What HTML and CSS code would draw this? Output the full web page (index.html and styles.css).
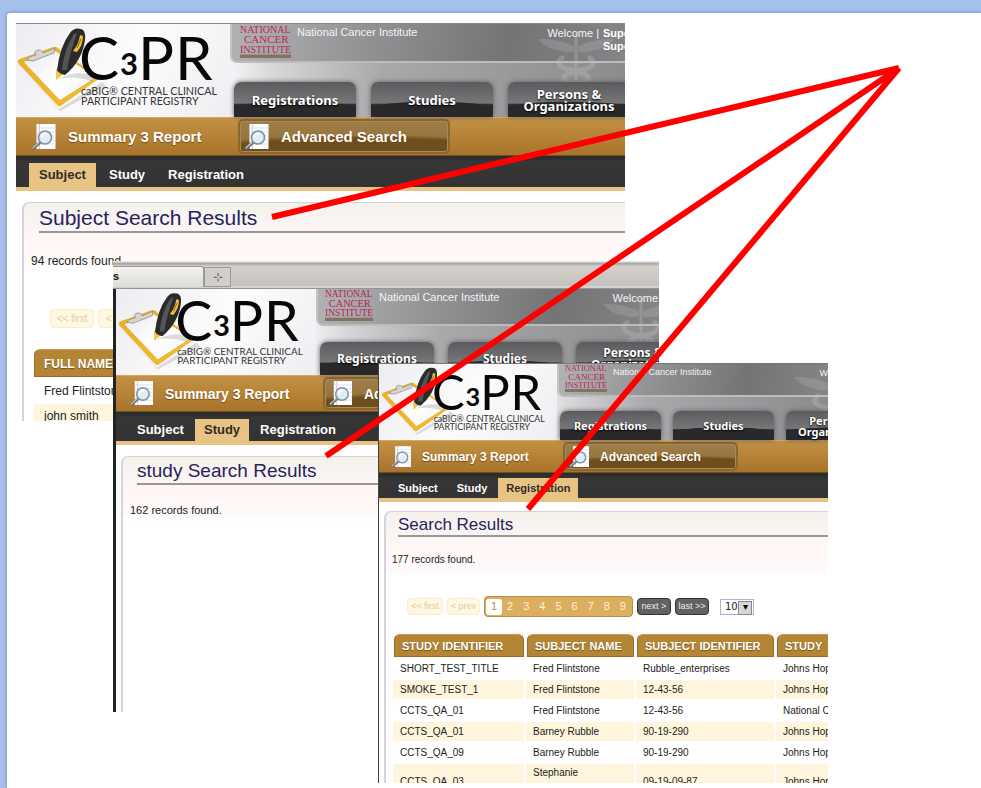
FILE: index.html
```html
<!DOCTYPE html>
<html lang="en">
<head>
<meta charset="utf-8">
<title>C3PR Search Results</title>
<link rel="stylesheet" href="styles.css">
</head>
<body>
<svg class="defs" aria-hidden="true">
  <defs>
    <linearGradient id="pen" x1="0" y1="0" x2="1" y2="0"><stop offset="0" stop-color="#111"/><stop offset=".5" stop-color="#4a4a4c"/><stop offset="1" stop-color="#1c1c1c"/></linearGradient>
    <linearGradient id="board" x1="0" y1="0" x2="1" y2="1"><stop offset="0" stop-color="#e8ae27"/><stop offset="1" stop-color="#f3bd35"/></linearGradient>
    <linearGradient id="paper" x1="0" y1="0" x2="1" y2="1"><stop offset="0" stop-color="#e9e9ed"/><stop offset=".5" stop-color="#fff"/><stop offset="1" stop-color="#f4f4f6"/></linearGradient>
    <symbol id="logo" viewBox="0 0 214 93">
      <path d="M4 42 43 85 86 58 90 62 44 87 Z" fill="#bbb" opacity=".5"/>
      <path d="M2 39Q1 36 4 35L37 23Q41 22 44 26L84 54 46 81Q43 84 40 80Z" fill="url(#board)"/>
      <path d="M8 38 39 27 80 53 44 76Z" fill="#fff" stroke="#d1a244" stroke-width=".6"/>
      <path d="M8 38 39 27 80 53 44 76Z" fill="url(#paper)"/>
      <path d="M42 55Q65 44 79 54L75 57Q58 51 42 55Z" fill="#999" opacity=".35"/>
      <path d="M11 36Q11 33 20 31Q17 27 22 26Q27 26 27 29L39 24 38 29 17 37Z" fill="#d6d4ce" stroke="#8d8b84" stroke-width=".8"/>
      <path d="M40 45 40 56 49 49Z" fill="#f4c447"/>
      <path d="M41 46Q44 22 54 9Q58 3 65 5Q70 6 69 16Q66 37 49 51Q43 50 41 46Z" fill="#2b2b2c"/>
      <path d="M46 46Q48 25 58 10L61 9Q54 28 51 46Z" fill="#555457"/>
      <path d="M64 11 67 12Q67 21 61 28L57 27Q63 20 64 11Z" fill="#f2bd2e"/>
      <path d="M65 15 61 24" stroke="#8d6d16" stroke-width="1"/>
      <g font-family="Lato, sans-serif" fill="#080808">
        <text x="63" y="56" font-size="60">C</text>
        <text x="104" y="51" font-size="31" font-weight="700">3</text>
        <text x="122" y="56" font-size="60">P</text>
        <text x="159" y="56" font-size="60">R</text>
      </g>
      <g font-family="Lato, sans-serif" font-size="10.7" fill="#333">
        <text x="65" y="71">caBIG® CENTRAL CLINICAL</text>
        <text x="65" y="81">PARTICIPANT REGISTRY</text>
      </g>
    </symbol>
    <symbol id="nci" viewBox="0 0 52 34">
      <g font-family="Liberation Serif, serif" fill="#b8265a">
        <text x="0" y="9" font-size="10">NATIONAL</text>
        <text x="4" y="19" font-size="11">CANCER</text>
        <text x="0" y="29" font-size="10">INSTITUTE</text>
      </g>
      <path d="M0 30.500H51V34H0Z" fill="#82745f"/>
    </symbol>
    <symbol id="doc" viewBox="0 0 24 26">
      <path d="M5 0H24V25H5Z" fill="#fbfdff"/>
      <path d="M5 4H24M5 8H24M5 12H24M5 16H24M5 20H24" stroke="#d5e4f5" stroke-width="1"/>
      <path d="M8 0V25" stroke="#f2bccb" stroke-width="1"/>
      <path d="M9 18 1 25" stroke="#6f7883" stroke-width="3"/>
      <path d="M8 18 1 24" stroke="#dfe4e8" stroke-width="1"/>
      <circle cx="13.500" cy="13.500" r="6.500" fill="#dceafa" fill-opacity=".85" stroke="#87919c" stroke-width="1.600"/>
      <path d="M10 13Q11 9 15 10" fill="none" stroke="#fff" stroke-width="1.500"/>
    </symbol>
    <symbol id="staff" viewBox="0 0 80 56">
      <g fill="none" stroke="#c4c4c4" stroke-linecap="round">
        <path d="M40 2V52" stroke-width="3"/>
        <path d="M26 26Q18 32 30 37Q56 42 52 48Q40 56 28 48Q24 42 50 37Q62 32 54 26" stroke-width="5"/>
      </g>
      <path d="M38 14Q20 6 2 7Q10 17 22 18Q30 22 38 19ZM42 14Q60 6 78 7Q70 17 58 18Q50 22 42 19Z" fill="#b4b4b4"/>
    </symbol>
  </defs>
</svg>

<main class="sheet">
  <section class="shot shot-subject" aria-label="Subject search">
    <header class="masthead">
      <svg class="logo" role="img" aria-label="C3PR"><use href="#logo"/></svg>
      <div class="mast-right">
        <svg class="staff" aria-hidden="true"><use href="#staff"/></svg>
        <div class="institute">
          <svg class="nci" role="img" aria-label="NCI"><use href="#nci"/></svg>
          <span class="inst-name">National Cancer Institute</span>
          <span class="welcome">Welcome |</span>
          <b class="user">Supe<br>Supe</b>
        </div>
        <nav class="areas">
          <a href="#">Registrations</a><a href="#">Studies</a><a href="#">Persons &amp;<br>Organizations</a>
        </nav>
      </div>
    </header>
    <nav class="goldbar">
      <a class="gold-link" href="#"><svg><use href="#doc"/></svg>Summary 3 Report</a>
      <a class="gold-link current" href="#"><svg><use href="#doc"/></svg>Advanced Search</a>
    </nav>
    <nav class="tabs"><a class="on" href="#">Subject</a><a href="#">Study</a><a href="#">Registration</a></nav>
    <div class="results">
      <h2>Subject Search Results</h2>
      <p class="count">94 records found.</p>
      <div class="pager"><button class="off" disabled>&lt;&lt; first</button><button class="off" disabled>&lt; prev</button></div>
      <table>
        <thead><tr><th><span>FULL NAME</span></th></tr></thead>
        <tbody><tr><td>Fred Flintstone</td></tr><tr><td>john smith</td></tr></tbody>
      </table>
    </div>
  </section>

  <section class="shot shot-study" aria-label="Study search">
    <div class="browser-tabs"><span class="browser-tab">s</span><button class="new-tab" aria-label="New tab">⊹</button></div>
    <div class="window">
    <header class="masthead">
      <svg class="logo" role="img" aria-label="C3PR"><use href="#logo"/></svg>
      <div class="mast-right">
        <svg class="staff" aria-hidden="true"><use href="#staff"/></svg>
        <div class="institute">
          <svg class="nci" role="img" aria-label="NCI"><use href="#nci"/></svg>
          <span class="inst-name">National Cancer Institute</span>
          <span class="welcome">Welcome</span>
        </div>
        <nav class="areas">
          <a href="#">Registrations</a><a href="#">Studies</a><a href="#">Persons &amp;<br>Organizations</a>
        </nav>
      </div>
    </header>
    <nav class="goldbar">
      <a class="gold-link" href="#"><svg><use href="#doc"/></svg>Summary 3 Report</a>
      <a class="gold-link current" href="#"><svg><use href="#doc"/></svg>Advanced Search</a>
    </nav>
    <nav class="tabs"><a href="#">Subject</a><a class="on" href="#">Study</a><a href="#">Registration</a></nav>
    <div class="results">
      <h2>study Search Results</h2>
      <p class="count">162 records found.</p>
    </div>
    </div>
  </section>

  <section class="shot shot-registration" aria-label="Registration search">
    <header class="masthead">
      <svg class="logo" role="img" aria-label="C3PR"><use href="#logo"/></svg>
      <div class="mast-right">
        <svg class="staff" aria-hidden="true"><use href="#staff"/></svg>
        <div class="institute">
          <svg class="nci" role="img" aria-label="NCI"><use href="#nci"/></svg>
          <span class="inst-name">National Cancer Institute</span>
          <span class="welcome">Welcome</span>
        </div>
        <nav class="areas">
          <a href="#">Registrations</a><a href="#">Studies</a><a href="#">Persons &amp;<br>Organizations</a>
        </nav>
      </div>
    </header>
    <nav class="goldbar">
      <a class="gold-link" href="#"><svg><use href="#doc"/></svg>Summary 3 Report</a>
      <a class="gold-link current" href="#"><svg><use href="#doc"/></svg>Advanced Search</a>
    </nav>
    <nav class="tabs"><a href="#">Subject</a><a href="#">Study</a><a class="on" href="#">Registration</a></nav>
    <div class="results">
      <h2>Search Results</h2>
      <p class="count">177 records found.</p>
      <div class="pager">
        <button class="off" disabled>&lt;&lt; first</button><button class="off" disabled>&lt; prev</button>
        <div class="pages"><button class="now">1</button><button>2</button><button>3</button><button>4</button><button>5</button><button>6</button><button>7</button><button>8</button><button>9</button></div>
        <button class="go">next &gt;</button><button class="go">last &gt;&gt;</button>
        <span class="size"><select aria-label="Rows per page"><option>10</option></select></span>
      </div>
      <table>
        <colgroup><col class="c1"><col class="c2"><col class="c3"><col class="c4"></colgroup>
        <thead><tr><th><span>STUDY IDENTIFIER</span></th><th><span>SUBJECT NAME</span></th><th><span>SUBJECT IDENTIFIER</span></th><th><span>STUDY</span></th></tr></thead>
        <tbody>
          <tr><td>SHORT_TEST_TITLE</td><td>Fred Flintstone</td><td>Rubble_enterprises</td><td>Johns Hopkins</td></tr>
          <tr><td>SMOKE_TEST_1</td><td>Fred Flintstone</td><td>12-43-56</td><td>Johns Hopkins</td></tr>
          <tr><td>CCTS_QA_01</td><td>Fred Flintstone</td><td>12-43-56</td><td>National Cancer</td></tr>
          <tr><td>CCTS_QA_01</td><td>Barney Rubble</td><td>90-19-290</td><td>Johns Hopkins</td></tr>
          <tr><td>CCTS_QA_09</td><td>Barney Rubble</td><td>90-19-290</td><td>Johns Hopkins</td></tr>
          <tr><td>CCTS_QA_03</td><td>Stephanie<br>&nbsp;</td><td>09-19-09-87</td><td>Johns Hopkins</td></tr>
        </tbody>
      </table>
    </div>
  </section>
</main>
<svg class="pointers" width="981" height="788" viewBox="0 0 981 788" aria-hidden="true">
  <path d="M272 217 899 68M326 456 899 68M528 509 899 68" stroke="#f00" stroke-width="6" fill="none"/>
</svg>
</body>
</html>
```
FILE: styles.css
```css
* { box-sizing: border-box; }
body {
  margin: 0;
  min-height: 100vh;
  padding: 13px 0 0 7px;
  display: flex;
  background: #a6c0ec;
  font-family: "Liberation Sans", Arial, sans-serif;
  overflow: hidden;
}
a { color: inherit; text-decoration: none; }
button { border: 0; padding: 0; margin: 0; background: none; font-family: inherit; }
.defs { position: absolute; width: 0; height: 0; }
.sheet { flex: 1; background: #fff; border-radius: 3px 0 0 0; box-shadow: 0 0 4px #6f88b4; }
.pointers { position: absolute; left: 0; top: 0; z-index: 1; pointer-events: none; }

/* Screens placed freely on the sheet */
.shot { position: absolute; isolation: isolate; overflow: hidden; background: #fff; color: #222; }
.shot-subject {
  left: 16px; top: 23px; width: 609px; height: 398px; border-top: 1px solid #8a8a8c;
  --head: 93px; --logo: 214px; --inst: 39px; --tab-w: 122px; --tab-h: 35px; --tab-gap: 15px; --tab-in: 4px;
  --nci-w: 52px; --nci-h: 34px; --nci-in: 8px; --small: 11px; --area: 13px; --area-line: 12px; --wel: 130px;
  --gold: 39px; --gold-fs: 15px; --gold-col: 222px; --gold-in: 15px; --icon-w: 25px; --icon-h: 26px; --icon-gap: 12px; --btn-w: 212px;
  --dark: 31px; --dark-fs: 13px; --on-h: 24px; --tab-pad: 10px; --tabs-in: 13px; --tabs-gap: 3px;
  --res-top: 11px; --res-left: 6px; --h2: 21px; --h2-h: 30px; --h2-in: 15px; --count: 12px; --count-top: 21px; --count-in: 7px;
  --pager-top: 40px; --pager-in: 26px; --table-top: 18px; --table-in: 8px; --th-h: 28px; --th: 12px; --td: 12px; --row: 23px; --cell-in: 10px;
}
.shot-study {
  left: 113px; top: 261px; width: 546px; height: 451px;
  --head: 86px; --logo: 200px; --inst: 37px; --tab-w: 114px; --tab-h: 33px; --tab-gap: 14px; --tab-in: 4px;
  --nci-w: 49px; --nci-h: 32px; --nci-in: 7px; --small: 11px; --area: 12px; --area-line: 12px; --wel: 113px;
  --gold: 37px; --gold-fs: 14px; --gold-col: 207px; --gold-in: 14px; --icon-w: 23px; --icon-h: 25px; --icon-gap: 12px; --btn-w: 200px;
  --dark: 29px; --dark-fs: 13px; --on-h: 22px; --tab-pad: 9px; --tabs-in: 12px; --tabs-gap: 2px;
  --res-top: 11px; --res-left: 5px; --h2: 19px; --h2-h: 28px; --h2-in: 14px; --count: 11px; --count-top: 18px; --count-in: 7px;
}
.shot-registration {
  left: 378px; top: 363px; width: 450px; height: 420px; border-top: 1px solid #777; border-left: 1px solid #444;
  --head: 76px; --logo: 178px; --inst: 33px; --tab-w: 101px; --tab-h: 29px; --tab-gap: 12px; --tab-in: 3px;
  --nci-w: 43px; --nci-h: 28px; --nci-in: 6px; --small: 9px; --area: 11px; --area-line: 11px; --wel: 108px;
  --gold: 33px; --gold-fs: 12px; --gold-col: 184px; --gold-in: 12px; --icon-w: 20px; --icon-h: 22px; --icon-gap: 11px; --btn-w: 175px;
  --dark: 25px; --dark-fs: 11px; --on-h: 20px; --tab-pad: 8px; --tabs-in: 11px; --tabs-gap: 3px;
  --res-top: 9px; --res-left: 5px; --h2: 17px; --h2-h: 25px; --h2-in: 12px; --count: 10px; --count-top: 16px; --count-in: 6px;
  --pager-top: 29px; --pager-in: 21px; --table-top: 13px; --table-in: 5px; --th-h: 23px; --th: 11px; --td: 10px; --row: 19px; --cell-in: 7px;
}

.browser-tabs { display: flex; align-items: flex-end; height: 28px; padding-bottom: 2px; background: linear-gradient(#e8e6e2 0 1px, #aaa8a5 2px 3px, #d4d1cc 5px, #c5c2bd 25px, #eee 26px, #777 28px); }
.browser-tab { width: 91px; height: 21px; padding-left: 0; border: 1px solid #999; border-left: 0; border-bottom: 0; border-radius: 0 3px 0 0; background: linear-gradient(#f4f3f1, #dddbd7); font: bold 11px/19px "Liberation Sans", sans-serif; color: #111; }
.new-tab { width: 27px; height: 20px; border: 1px solid #999; background: #d2cfcb; color: #555; font-size: 12px; line-height: 16px; }
.window { border-left: 3px solid #202224; height: 423px; }

.masthead { display: grid; grid-template-columns: var(--logo) 1fr; height: var(--head); background: linear-gradient(90deg, #f1eff3 0, #f2f1f4 36%, #d8d7da 42%, #a9a8ab 60%, #8c8b8e 100%); }
.logo { width: 100%; height: var(--head); background: linear-gradient(120deg, #eeecf1, #fcfcfd 50%, #efedf1); }
.mast-right { position: relative; display: flex; flex-direction: column; justify-content: space-between; min-width: 0; }
.institute { display: flex; height: var(--inst); padding-left: var(--nci-in); border-left: 2px solid #c4c4c6; border-bottom: 2px solid #bcbcbe; border-radius: 0 0 0 7px; background: linear-gradient(100deg, #b2b2b4, #8d8c8e 40%, #747376 70%, #858486); color: #f4f4f4; font-size: var(--small); line-height: 13px; white-space: nowrap; }
.nci { flex: none; width: var(--nci-w); height: var(--nci-h); }
.inst-name { margin: 2px var(--wel) 0 5px; }
.welcome, .user { position: relative; margin-top: 3px; margin-right: 4px; }
.user { color: #fff; }
.staff { position: absolute; z-index: 1; right: 9px; top: 8px; width: 80px; height: 56px; opacity: .3; }
.shot-registration .staff { right: -44px; top: 6px; }
.shot-study .staff { right: -22px; }
.welcome, .user, .areas { z-index: 2; }
.areas { display: flex; gap: var(--tab-gap); padding-left: var(--tab-in); position: relative; }
.areas a { flex: none; display: flex; align-items: center; justify-content: center; width: var(--tab-w); height: var(--tab-h); border-radius: 7px 7px 0 0; background: radial-gradient(ellipse 75% 45% at 50% 100%, #29292b 95%, transparent 100%), linear-gradient(#5b5a5d, #777679 60%, #29292b 65%); box-shadow: 0 0 5px #5c5b5e; color: #fff; font: bold var(--area)/var(--area-line) "Noto Sans", sans-serif; text-align: center; text-shadow: 0 1px 2px #000; }

.goldbar { display: grid; grid-template-columns: var(--gold-col) var(--btn-w); align-items: center; height: var(--gold); border-top: 1px solid #d4a75a; border-bottom: 1px solid #75501b; background: linear-gradient(#c39143, #a8742b); color: #fff; font-size: var(--gold-fs); font-weight: bold; white-space: nowrap; }
.gold-link { display: flex; align-items: center; gap: var(--icon-gap); padding-left: var(--gold-in); text-shadow: 0 1px 1px #6f4a16; }
.gold-link svg { flex: none; width: var(--icon-w); height: var(--icon-h); }
.gold-link.current { align-self: stretch; margin: 1px 0; padding-left: 4px; border: 2px solid #8a6731; border-radius: 5px; box-shadow: inset 0 0 0 1px #a98b58; background: radial-gradient(ellipse 90% 55% at 60% 100%, #6f4e1e 80%, transparent), linear-gradient(#a07e49, #8f6d36); }

.tabs { display: flex; align-items: flex-end; gap: var(--tabs-gap); height: calc(var(--dark) + 4px); padding-left: var(--tabs-in); border-bottom: 4px solid #e8c484; background: linear-gradient(#292929, #373637 6px, #343334); color: #fff; font-size: var(--dark-fs); font-weight: bold; }
.tabs a { height: var(--on-h); line-height: var(--on-h); padding: 0 var(--tab-pad); }
.tabs .on { background: #e8c484; color: #302c25; }

.results { margin: var(--res-top) 0 0 var(--res-left); height: 420px; border: 2px solid #d5d2db; border-right: 0; border-top-width: 1px; border-radius: 7px 0 0 0; background: linear-gradient(#f5f1ea, #fbf6f5 28px, #fff6f5 32px, #fffafa 58px, #fff 64px); white-space: nowrap; }
h2 { margin: 0 0 0 var(--h2-in); height: var(--h2-h); border-bottom: 2px solid #9b9799; color: #26235e; font-size: var(--h2); font-weight: normal; line-height: var(--h2-h); }
.count { margin: var(--count-top) 0 0 var(--count-in); font-size: var(--count); line-height: 14px; }
.pager { display: flex; align-items: center; height: 21px; margin: var(--pager-top) 0 0 var(--pager-in); gap: 4px; }
.pager button { font-size: 9px; line-height: 15px; }
.pager .off { width: 36px; height: 17px; border: 1px solid #fbecca; border-radius: 4px; background: #fff7e2; color: #e3cda0; }
.pager .off + .off { width: 33px; }
.shot-subject .pager .off { width: 44px; height: 19px; font-size: 10px; }
.pages { display: flex; align-items: center; width: 149px; height: 21px; padding: 0 1px; border: 1px solid #b98c43; border-radius: 4px; background: #dcae5f; }
.pages button { flex: 1; height: 16px; color: #fff3d6; font-size: 11px; }
.pages .now { border-radius: 3px; background: #fff; color: #b98a40; }
.pager .go { width: 34px; height: 17px; border: 1px solid #333; border-radius: 4px; background: #626163; color: #eee; }
.size { position: relative; display: flex; width: 34px; height: 16px; margin-left: 7px; border: 1px solid #9fb7d4; }
.size select { appearance: none; width: 100%; border: 0; padding: 0 0 0 4px; background: #fff; color: #222; font: 10px/14px "DejaVu Sans", sans-serif; }
.size::after { content: "▾"; position: absolute; right: 1px; top: 1px; width: 12px; height: 12px; border: 1px solid #888; background: #dad7d0; color: #000; font-size: 10px; line-height: 10px; text-align: center; pointer-events: none; }

table { margin: var(--table-top) 0 0 var(--table-in); border-spacing: 2px; table-layout: fixed; width: 480px; }
.c1 { width: 131px; } .c2 { width: 108px; } .c3 { width: 138px; } .c4 { width: 93px; }
th { padding: 2px 0 0 1px; background: #faf6fb; text-align: left; }
th span { display: block; height: var(--th-h); padding-left: 7px; border: 1px solid #9a6d28; border-top-color: #c99b50; border-radius: 6px 6px 0 0; background: #b38534; color: #fff; font-size: var(--th); line-height: var(--th-h); text-shadow: 0 1px 1px #76521b; }
.shot-subject th { padding: 0; }
.shot-subject th span { padding-left: 9px; }
td { height: var(--row); padding: 0 var(--cell-in); font-size: var(--td); line-height: 14px; }
tbody tr:nth-child(even) td { background: #fff5dc; }
tr:nth-child(6) td { line-height: 17px; }
```
